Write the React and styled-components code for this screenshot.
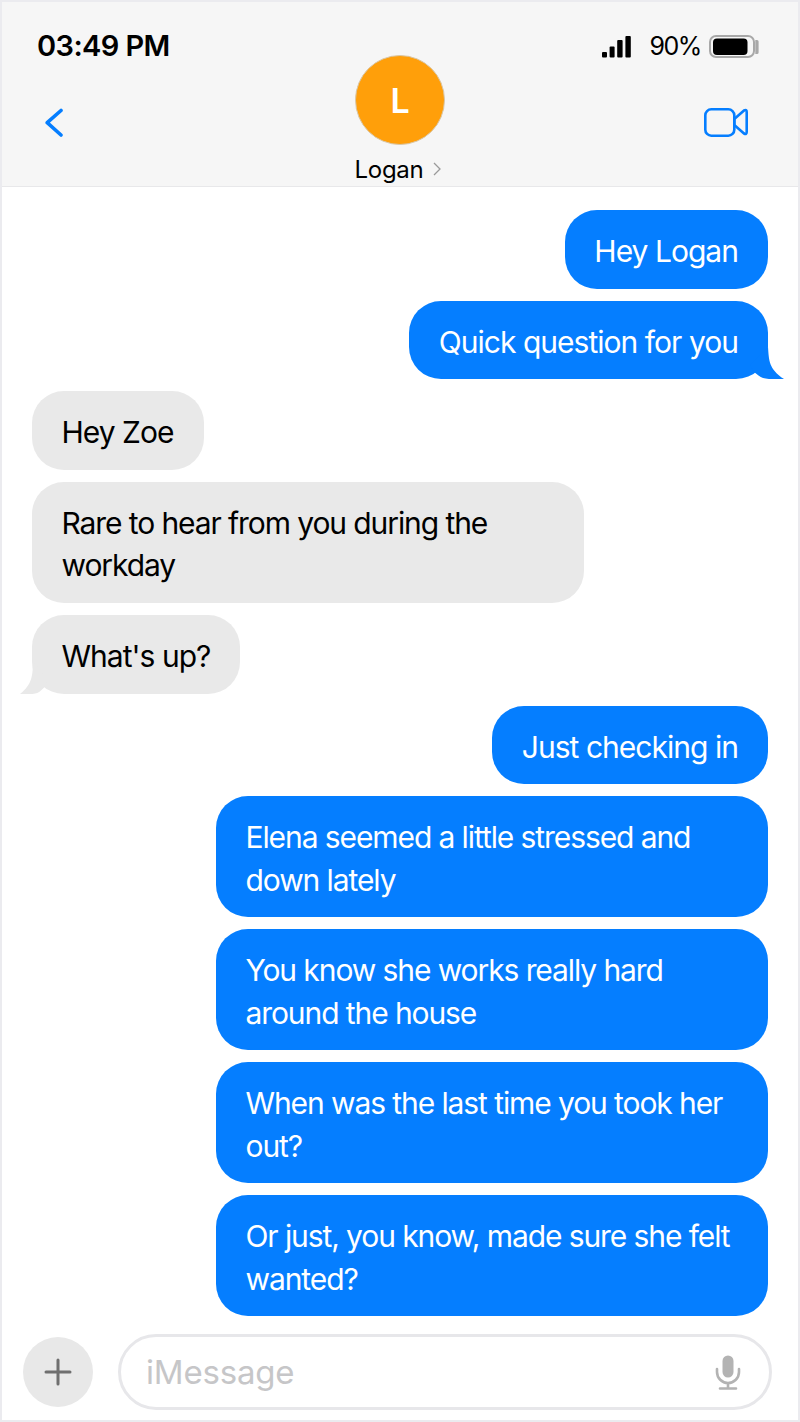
import React from "react";
import styled, { createGlobalStyle } from "styled-components";

const Global = createGlobalStyle`
  html, body { margin: 0; padding: 0; background: #fff; }
  * { box-sizing: border-box; }
`;
const Phone = styled.div`
  width: 800px; height: 1422px; border: 2px solid #ebebef; background: #fff;
  font-family: Inter, "Liberation Sans", sans-serif; color: #000;
  display: flex; flex-direction: column; overflow: hidden;
`;
const Header = styled.header`
  height: 185px; flex: none; background: #f6f6f6; border-bottom: 1px solid #e8e8ea;
  display: flex; flex-direction: column;
`;
const StatusBar = styled.div`
  height: 53px; flex: none; padding: 35px 39px 0 35px;
  display: flex; justify-content: space-between; align-items: center;
`;
const Clock = styled.span`
  font-size: 29px; font-weight: 600; letter-spacing: -0.6px; line-height: 38px;
`;
const Status = styled.div`display: flex; align-items: center;`;
const Battery = styled.span`font-size: 25px; line-height: 30px; margin: 0 8px 0 18px; letter-spacing: -1.4px;`;
const Nav = styled.div`
  flex: 1; padding: 0 50px 0 43px; display: grid; grid-template-columns: 310px 90px 1fr; align-items: start;
`;
const IconSlot = styled.div`
  display: flex; margin-top: 51px; justify-content: ${p => (p.$end ? "flex-end" : "flex-start")};
`;
const Contact = styled.div`display: flex; flex-direction: column; align-items: center; width: 90px;`;
const Avatar = styled.div`
  width: 90px; height: 90px; flex: none; border-radius: 50%; background: #ff9f0a; border: 1px solid #d9c7a8;
  color: #fff; font-size: 34px; font-weight: 600; display: flex; align-items: center; justify-content: center;
`;
const NameRow = styled.div`display: flex; align-items: center; gap: 10px; margin: 8px -4px 0 -4px; height: 32px; white-space: nowrap; transform: translateX(-2px);`;
const Name = styled.span`font-size: 24px; letter-spacing: -0.3px;`;
const Thread = styled.main`
  flex: 1; padding: 23px 30px 0; display: flex; flex-direction: column; gap: 12px; min-height: 0;
`;
const Bubble = styled.div`
  position: relative; max-width: 552px; width: ${p => (p.$wide ? "552px" : "fit-content")};
  padding: 20.17px 30px 16.17px 29.5px; border-radius: 32px; font-size: 30px; line-height: 42.33px;
  letter-spacing: ${p => (p.$wide ? "-1.09px" : "-0.97px")};
  background: ${p => (p.$mine ? "#057eff" : "#e9e9e9")};
  color: ${p => (p.$mine ? "#fff" : "#000")};
  align-self: ${p => (p.$mine ? "flex-end" : "flex-start")};
`;
const Tail = styled.svg`
  position: absolute; bottom: 0; height: 34px; width: ${p => (p.$mine ? 34 : 28)}px;
  ${p => (p.$mine ? "right: -16px;" : "left: -12px; transform: scaleX(-1);")}
`;
const Composer = styled.footer`
  height: 72px; flex: none; margin-bottom: 12px; padding: 0 26px 0 21px; display: flex; align-items: center; gap: 25px;
`;
const Plus = styled.div`
  width: 70px; height: 70px; border-radius: 50%; background: #e8e8e8; flex: none;
  display: flex; align-items: center; justify-content: center;
`;
const Field = styled.div`
  flex: 1; height: 76px; border: 3px solid #e7e7ea; border-radius: 38px; padding: 0 28px 0 25px;
  display: flex; align-items: center; justify-content: space-between;
`;
const Placeholder = styled.span`font-size: 33px; color: #c6c6c8; letter-spacing: -0.2px;`;

const Message = ({ mine, wide, tail, children }) => (
  <Bubble $mine={mine} $wide={wide}>
    {children}
    {tail && (
      <Tail $mine={mine} viewBox="0 0 34 34" preserveAspectRatio="none">
        <path d="M18 2C19 15 18.5 24 34 34C28 34.5 18 34.5 13 33C10 32 7 29.5 4 27L0 20Z" fill={mine ? "#057eff" : "#e9e9e9"} />
      </Tail>
    )}
  </Bubble>
);

export default function App() {
  return (
    <>
      <Global />
      <Phone>
        <Header>
          <StatusBar>
            <Clock>03:49 PM</Clock>
            <Status>
              <svg width="29" height="24" viewBox="0 0 29 24">
                <rect x="0" y="18" width="5" height="5.5" rx="1" />
                <rect x="7.6" y="12.5" width="5" height="11" rx="1" />
                <rect x="15.2" y="6" width="5.4" height="17.5" rx="1" />
                <rect x="23.4" y="2" width="5.4" height="21.5" rx="1" />
              </svg>
              <Battery>90%</Battery>
              <svg width="50" height="24" viewBox="0 0 50 24">
                <rect x="1" y="2" width="44" height="21" rx="6" fill="none" stroke="#a8a8a8" strokeWidth="2" />
                <rect x="4" y="4.5" width="34.5" height="16.5" rx="4" fill="#000" />
                <path d="M46.3 6h1.7a1.6 1.6 0 0 1 1.6 1.6v10.8a1.6 1.6 0 0 1-1.6 1.6h-1.7z" fill="#a8a8a8" />
              </svg>
            </Status>
          </StatusBar>
          <Nav>
            <IconSlot>
              <svg width="20" height="34" viewBox="0 0 20 34" fill="none" stroke="#057eff" strokeWidth="3.6" strokeLinecap="round" strokeLinejoin="round">
                <path d="M16 4.5 L2.2 16.7 L16 29" />
              </svg>
            </IconSlot>
            <Contact>
              <Avatar>L</Avatar>
              <NameRow>
                <Name>Logan</Name>
                <svg width="8" height="14" viewBox="0 0 8 14" fill="none" stroke="#9a9a9a" strokeWidth="1.3">
                  <path d="M1 1 L7 7 L1 13" />
                </svg>
              </NameRow>
            </Contact>
            <IconSlot $end>
              <svg width="44" height="32" viewBox="0 0 44 32" fill="none" stroke="#057eff" strokeWidth="2.6" strokeLinejoin="round">
                <rect x="1.3" y="3.3" width="29" height="26.4" rx="6" />
                <path d="M30.3 13 L40 4.5 Q42.7 3.2 42.7 6 V26 Q42.7 28.8 40 27.5 L30.3 19Z" />
              </svg>
            </IconSlot>
          </Nav>
        </Header>
        <Thread>
          <Message mine>Hey Logan</Message>
          <Message mine tail>Quick question for you</Message>
          <Message>Hey Zoe</Message>
          <Message wide>Rare to hear from you during the workday</Message>
          <Message tail>What's up?</Message>
          <Message mine>Just checking in</Message>
          <Message mine wide>Elena seemed a little stressed and down lately</Message>
          <Message mine wide>You know she works really hard around the house</Message>
          <Message mine wide>When was the last time you took her out?</Message>
          <Message mine wide>Or just, you know, made sure she felt wanted?</Message>
        </Thread>
        <Composer>
          <Plus>
            <svg width="28" height="28" viewBox="0 0 28 28" stroke="#6f6f6f" strokeWidth="3" strokeLinecap="round">
              <path d="M14 2V26M2 14H26" />
            </svg>
          </Plus>
          <Field>
            <Placeholder>iMessage</Placeholder>
            <svg width="26" height="36" viewBox="0 0 26 36" fill="none" stroke="#b3b3b3" strokeWidth="2.6">
              <rect x="7.5" y="1.5" width="11" height="22" rx="5.5" fill="#b3b3b3" stroke="none" />
              <path d="M2 15V18A11 11 0 0 0 24 18V15M13 29V34M5 34.5H21" strokeLinecap="round" />
            </svg>
          </Field>
        </Composer>
      </Phone>
    </>
  );
}
